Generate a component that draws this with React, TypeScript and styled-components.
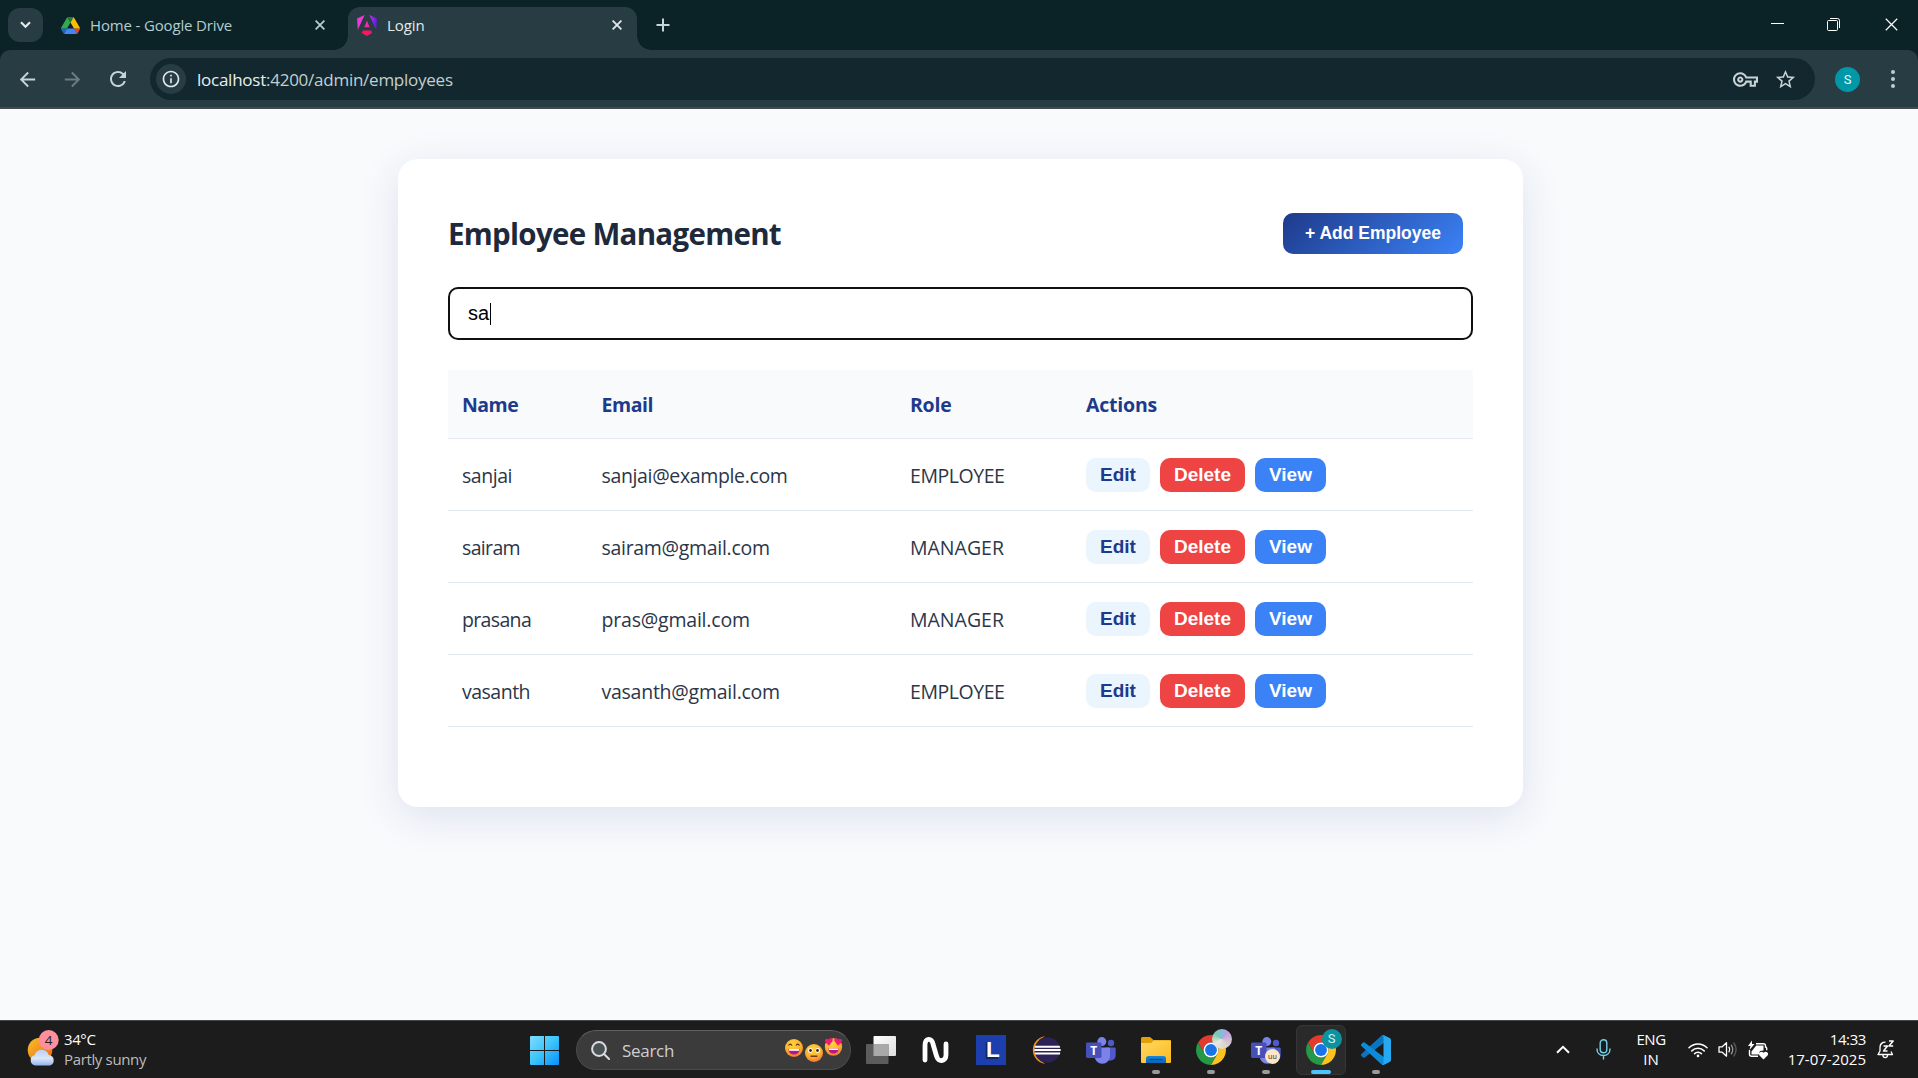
import React from "react";
import styled, { createGlobalStyle, css } from "styled-components";
import { MdArrowBack, MdArrowForward, MdRefresh, MdInfoOutline, MdOutlineVpnKey, MdStarBorder } from "react-icons/md";

const UI_FONT = `"Segoe UI", "Open Sans", "Noto Sans", sans-serif`;
const FORM_FONT = `Arial, "Liberation Sans", sans-serif`;

const GlobalStyle = createGlobalStyle`
  *, *::before, *::after { box-sizing: border-box; }
  body { margin: 0; background: #f8fafc; font-family: ${UI_FONT}; overflow: hidden; }
  svg { display: block; flex: none; }
`;

const Screen = styled.div`
  width: 1918px;
  height: 1078px;
  display: flex;
  flex-direction: column;
  overflow: hidden;
`;

const Label = styled.span<{ $track?: number }>`
  white-space: pre;
  letter-spacing: ${(p) => p.$track ?? 0}px;
`;

/* ---------- Browser window ---------- */

const TabStrip = styled.header`
  height: 50px;
  flex: none;
  display: flex;
  align-items: flex-start;
  background: #0b2227;
  color: #b4cdd2;
`;

const TabSearch = styled.button`
  width: 35px;
  height: 34px;
  margin: 8px 0 0 8px;
  padding: 0;
  border: 0;
  border-radius: 12px;
  background: #283d43;
  display: grid;
  place-items: center;
`;

const Tab = styled.div<{ $active?: boolean }>`
  position: relative;
  display: flex;
  align-items: center;
  height: 43px;
  margin-top: 7px;
  padding-bottom: 7px;
  font-size: 15px;
  line-height: 20px;
  ${(p) =>
    p.$active
      ? css`
          width: 289px;
          padding-left: 9px;
          padding-right: 15px;
          color: #e3eaec;
          background: #283d43;
          border-radius: 12px 12px 0 0;
          &::before,
          &::after {
            content: "";
            position: absolute;
            bottom: 0;
            width: 14px;
            height: 14px;
          }
          &::before {
            left: -14px;
            background: radial-gradient(circle at 0 0, transparent 13.5px, #283d43 14px);
          }
          &::after {
            right: -14px;
            background: radial-gradient(circle at 100% 0, transparent 13.5px, #283d43 14px);
          }
        `
      : css`
          width: 305px;
          padding-left: 18px;
          padding-right: 23px;
        `}
`;

const TabTitle = styled(Label)`
  margin-left: 10px;
  flex: 1;
`;

const NewTab = styled.div`
  margin: 18px 0 0 19px;
`;

const WindowButtons = styled.div`
  margin-left: auto;
  padding: 18px 20px 0 0;
  display: flex;
  gap: 45px;
  color: #fff;
  & > :first-child {
    margin-right: -2px;
  }
`;

const Toolbar = styled.div`
  height: 59px;
  flex: none;
  background: #0b2227;
`;

const ToolbarInner = styled.div`
  height: 59px;
  display: flex;
  align-items: center;
  padding-top: 1px;
  background: #283d43;
  border-bottom: 2px solid #45494c;
  border-radius: 10px 10px 0 0;
  color: #c3d5da;
`;

const NavButtons = styled.nav`
  width: 150px;
  display: flex;
  align-items: center;
  padding-left: 16px;
  gap: 22px;
  & > :nth-child(2) {
    color: #6b7d83;
  }
`;

const Omnibox = styled.div`
  width: 1665px;
  height: 42px;
  border-radius: 21px;
  background: #12282e;
  display: flex;
  align-items: center;
  padding: 0 18px 0 6px;
  color: #c3cfd2;
`;

const InfoBadge = styled.span`
  width: 30px;
  height: 30px;
  border-radius: 50%;
  background: #283d43;
  color: #dfe8ea;
  display: grid;
  place-items: center;
`;

const Url = styled(Label)`
  flex: 1;
  margin-left: 11px;
  padding-top: 2px;
  font-size: 17px;
  line-height: 24px;
  em {
    font-style: normal;
    color: #e6eef0;
  }
`;

const OmniActions = styled.div`
  display: flex;
  align-items: center;
  gap: 16px;
  color: #c8d3d6;
`;

const Avatar = styled.span`
  width: 25px;
  height: 25px;
  margin-left: 20px;
  border-radius: 50%;
  background: #0097a7;
  color: #e8f6f8;
  font: 13px/25px Roboto, sans-serif;
  text-align: center;
`;

const MenuDots = styled.span`
  margin-left: 30.5px;
  display: flex;
  flex-direction: column;
  gap: 3px;
  i {
    width: 4px;
    height: 4px;
    border-radius: 50%;
    background: #b9cfd4;
  }
`;

/* ---------- Page ---------- */

const Page = styled.main`
  flex: 1;
  min-height: 0;
  padding: 50px 0 0 398px;
  background: #f8fafc;
`;

const Card = styled.section`
  width: 1125px;
  height: 648px;
  padding: 54px 50px 0;
  border-radius: 20px;
  background: #fff;
  box-shadow: 0 10px 40px rgba(30, 58, 138, 0.12);
`;

const CardHeader = styled.div`
  height: 41px;
  display: flex;
  justify-content: space-between;
  align-items: center;
  padding-right: 10px;
`;

const Title = styled.h1`
  margin: 0;
  padding-top: 1px;
  font-size: 29.5px;
  line-height: 40px;
  font-weight: 700;
  color: #1e293b;
`;

const AddButton = styled.button`
  height: 41px;
  width: 180px;
  padding: 0 0 2px;
  border: 0;
  border-radius: 10px;
  background: linear-gradient(135deg, #1e3a8a, #3b82f6);
  color: #fff;
  font: 700 17.5px/24px ${FORM_FONT};
`;

const SearchField = styled.div`
  height: 53px;
  margin-top: 33px;
  padding: 0 18px;
  border: 2px solid #101010;
  border-radius: 10px;
  display: flex;
  align-items: center;
  font: 20px/23px ${FORM_FONT};
  color: #000;
`;

const Caret = styled.i`
  width: 1px;
  height: 22px;
  margin-left: 1px;
  background: #000;
`;

const Row = styled.div<{ $head?: boolean }>`
  display: grid;
  grid-template-columns: 139.5px 308.5px 176px 1fr;
  align-items: center;
  height: ${(p) => (p.$head ? 69 : 72)}px;
  padding: 0 14px;
  border-bottom: 1px solid #e2e8f4;
  background: ${(p) => (p.$head ? "#f8fafc" : "#fff")};
  color: ${(p) => (p.$head ? "#1e3a8a" : "#2b3648")};
  font-weight: ${(p) => (p.$head ? 700 : 400)};
  font-size: 19.5px;
  line-height: 28px;
  & > span {
    padding-top: 2px;
  }
`;

const Table = styled.div`
  margin-top: 30px;
`;

const Actions = styled.div`
  display: flex;
  gap: 10px;
`;

const tones = {
  edit: { bg: "#eaf5fd", fg: "#1e3a8a", w: 64 },
  delete: { bg: "#ef4444", fg: "#fff", w: 85 },
  view: { bg: "#3b82f6", fg: "#fff", w: 71 },
};

const ActionButton = styled.button<{ $tone: keyof typeof tones }>`
  width: ${(p) => tones[p.$tone].w}px;
  height: 34px;
  padding: 0;
  border: 0;
  border-radius: 10px;
  background: ${(p) => tones[p.$tone].bg};
  color: ${(p) => tones[p.$tone].fg};
  font: 700 19px/22px ${FORM_FONT};
`;

/* ---------- Taskbar ---------- */

const Taskbar = styled.footer`
  height: 58px;
  flex: none;
  display: flex;
  border-top: 1px solid #44484a;
  background: #1c1c1c;
  color: #fff;
`;

const Weather = styled.div`
  width: 517px;
  padding-left: 26px;
  display: flex;
  align-items: center;
  gap: 4px;
`;

const TwoLines = styled.div<{ $align?: string }>`
  display: flex;
  flex-direction: column;
  padding-bottom: 2px;
  text-align: ${(p) => p.$align ?? "left"};
  font-size: 15px;
  line-height: 20px;
`;

const Muted = styled(Label)`
  color: #bdbdbd;
`;

const Slot = styled.div<{ $active?: boolean }>`
  position: relative;
  width: 55px;
  display: grid;
  place-items: center;
  padding-top: 1px;
  ${(p) =>
    p.$active &&
    css`
      width: 50px;
      height: 50px;
      margin: 4px 2.5px 0;
      padding: 0;
      border: 1px solid #363636;
      border-radius: 6px;
      background: #2a2a2a;
    `}
`;

const Pip = styled.i<{ $active?: boolean }>`
  position: absolute;
  bottom: ${(p) => (p.$active ? 0 : 4)}px;
  left: 50%;
  width: ${(p) => (p.$active ? 20 : 8)}px;
  height: 4px;
  transform: translateX(-50%);
  border-radius: 2px;
  background: ${(p) => (p.$active ? "#4cc2ff" : "#9a9a9a")};
`;

const SearchPill = styled.div`
  width: 275px;
  height: 40px;
  margin: 9px 2px 0 4px;
  padding: 0 6px 0 14px;
  border: 1px solid #4b4b4b;
  border-top-color: #606060;
  border-radius: 20px;
  background: #3b3b3b;
  display: flex;
  align-items: center;
  font-size: 17px;
  color: #cfcfcf;
  & > span {
    flex: 1;
    margin-left: 12px;
  }
`;

const Tray = styled.div`
  margin-left: auto;
  padding-right: 24px;
  display: flex;
  align-items: center;
`;

const Gap = styled.span<{ $w: number }>`
  flex: none;
  width: ${(p) => p.$w}px;
`;

/* ---------- Drawings ---------- */

const Cross = ({ size = 10, w = 1.8 }: { size?: number; w?: number }) => (
  <svg width={size} height={size} viewBox="0 0 10 10" stroke="currentColor" strokeWidth={w} fill="none">
    <path d="M.6 .6 9.4 9.4M9.4 .6 .6 9.4" />
  </svg>
);

const DriveLogo = () => (
  <svg width="19" height="17" viewBox="0 0 87.3 78">
    <path d="m6.6 66.85 3.85 6.65c.8 1.4 1.95 2.5 3.3 3.3l13.75-23.8h-27.5c0 1.55.4 3.1 1.2 4.5z" fill="#1967d2" />
    <path d="m43.65 25-13.75-23.8c-1.35.8-2.5 1.9-3.3 3.3l-25.4 44a9.06 9.06 0 0 0 -1.2 4.5h27.5z" fill="#34a853" />
    <path d="m73.55 76.8c1.35-.8 2.5-1.9 3.3-3.3l1.6-2.75 7.65-13.25c.8-1.4 1.2-2.95 1.2-4.5h-27.502l5.852 11.5z" fill="#ea4335" />
    <path d="m43.65 25 13.75-23.8c-1.35-.8-2.9-1.2-4.5-1.2h-18.5c-1.6 0-3.15.45-4.5 1.2z" fill="#188038" />
    <path d="m59.8 53h-32.3l-13.75 23.8c1.35.8 2.9 1.2 4.5 1.2h50.8c1.6 0 3.15-.45 4.5-1.2z" fill="#4285f4" />
    <path d="m73.4 26.5-12.7-22c-.8-1.4-1.95-2.5-3.3-3.3l-13.75 23.8 16.15 28h27.45c0-1.55-.4-3.1-1.2-4.5z" fill="#fbbc04" />
  </svg>
);

const AngularLogo = () => (
  <svg width="20" height="21" viewBox="0 0 223 236">
    <defs>
      <linearGradient id="ngA" x1="0" y1="0" x2="1" y2="0.2">
        <stop offset="0" stopColor="#f637d0" />
        <stop offset=".45" stopColor="#e040d8" />
        <stop offset="1" stopColor="#6a1cf0" />
      </linearGradient>
      <linearGradient id="ngB" x1="0" y1="0" x2="1" y2="0">
        <stop offset="0" stopColor="#ff1654" />
        <stop offset="1" stopColor="#f0186c" />
      </linearGradient>
    </defs>
    <path fill="url(#ngA)" d="M222.077 39.192l-8.019 125.923L137.387 0l84.69 39.192zM7.937 165.115L0 39.192 84.69 0 7.937 165.115z" />
    <path fill="#f02aa8" d="M111.039 62.675l30.357 73.803H80.681l30.358-73.803z" />
    <path fill="url(#ngB)" d="M168.972 202.017l-57.933 33.056-57.934-33.056 11.783-28.556h92.301l11.783 28.556z" />
  </svg>
);

const WeatherIcon = () => (
  <svg width="34" height="40" viewBox="0 0 34 40">
    <defs>
      <linearGradient id="sun" x1="0" y1="0" x2="1" y2="1">
        <stop offset="0" stopColor="#f6c02c" />
        <stop offset="1" stopColor="#f0650c" />
      </linearGradient>
      <linearGradient id="cloud" x1="0" y1="0" x2="0" y2="1">
        <stop offset="0" stopColor="#b9d0f5" />
        <stop offset=".55" stopColor="#dbe6f7" />
        <stop offset="1" stopColor="#8fb4ef" />
      </linearGradient>
    </defs>
    <circle cx="14" cy="20" r="12.3" fill="url(#sun)" />
    <path d="M9.500 35.500a5.200 5.200 0 0 1-1-10.200c1-3.600 4-5.500 7-5.500 3.600 0 6.300 2 7.200 5.100a5.400 5.400 0 0 1 1 10.600z" fill="url(#cloud)" />
    <circle cx="22.700" cy="10" r="10" fill="#ff8f9c" />
    <text x="22.700" y="15" textAnchor="middle" fontFamily="Open Sans" fontSize="13.500" fill="#222">4</text>
  </svg>
);

const StartLogo = () => (
  <svg width="29" height="29" viewBox="0 0 29 29">
    <defs>
      <linearGradient id="win" x1="0" y1="0" x2="1" y2="1">
        <stop offset="0" stopColor="#7fdcff" />
        <stop offset=".5" stopColor="#3cc4fb" />
        <stop offset="1" stopColor="#0a8efc" />
      </linearGradient>
    </defs>
    <path fill="url(#win)" d="M1 0h13v14H0V1a1 1 0 0 1 1-1zM15 0h13a1 1 0 0 1 1 1v13H15zM0 15h14v14H1a1 1 0 0 1-1-1zM15 15h14v13a1 1 0 0 1-1 1H15z" />
  </svg>
);

const Magnifier = () => (
  <svg width="19" height="19" viewBox="0 0 19 19" fill="none" stroke="#d8dde0" strokeWidth="2" strokeLinecap="round">
    <circle cx="8" cy="8" r="6.900" fill="#4c5154" />
    <path d="M13 13l5 5" />
  </svg>
);

const Emojis = () => (
  <svg width="60" height="26" viewBox="0 0 60 26">
    <defs>
      <radialGradient id="face" cx=".45" cy=".3" r=".75">
        <stop offset="0" stopColor="#ffd53c" />
        <stop offset=".6" stopColor="#fdb12c" />
        <stop offset="1" stopColor="#ee6a35" />
      </radialGradient>
    </defs>
    <circle cx="10" cy="11" r="9" fill="url(#face)" />
    <path d="M4.500 12h11c0 3.800-2.500 5.500-5.500 5.500S4.500 15.800 4.500 12z" fill="#b5178b" />
    <path d="M5 12h10v1.800H5z" fill="#fff" />
    <path d="M4.500 8.500q1.800-2.600 3.600 0M11.900 8.500q1.800-2.600 3.600 0" fill="none" stroke="#5b2a1c" strokeWidth="1.200" />
    <circle cx="30" cy="16" r="9" fill="url(#face)" />
    <circle cx="26.300" cy="13.500" r="2.400" fill="#fff" />
    <circle cx="33.700" cy="13.500" r="2.400" fill="#fff" />
    <circle cx="26.500" cy="13.500" r="1.400" fill="#40221a" />
    <circle cx="33.500" cy="13.500" r="1.400" fill="#40221a" />
    <path d="M26.500 19.200h7" stroke="#5b2a1c" strokeWidth="1.300" />
    <circle cx="49.500" cy="10" r="8.700" fill="url(#face)" />
    <path d="M44.500 11.500h10c0 3.600-2.200 5-5 5s-5-1.400-5-5z" fill="#b5178b" />
    <path d="M45 11.500h9v1.500h-9z" fill="#fff" />
    <path d="M45 8.800l-3.600-3.500c-1.700-2.300 1.200-5.200 3.400-2.700 1.200-3 5-1.600 3.700 1.400zM54 8.800l-3.500-4.800c-1.300-3 2.500-4.400 3.700-1.400 2.200-2.500 5.100.4 3.400 2.700z" fill="#ee1c72" />
  </svg>
);

const TaskViewIcon = () => (
  <svg width="30" height="28" viewBox="0 0 30 28">
    <defs>
      <linearGradient id="tv" x1="0" y1="0" x2="1" y2="1">
        <stop offset="0" stopColor="#fff" />
        <stop offset="1" stopColor="#dcdcdc" />
      </linearGradient>
    </defs>
    <rect x="7.500" y="0" width="22.500" height="20" rx="1" fill="url(#tv)" />
    <rect x="0" y="8" width="22.500" height="20" rx="1" fill="#5c5c5c" />
    <rect x="7.500" y="8" width="15" height="12" fill="#a9a9a9" />
  </svg>
);

const WaveIcon = () => (
  <svg width="27" height="28" viewBox="0 0 27 28" fill="none" stroke="#fff" strokeWidth="4.800" strokeLinejoin="round">
    <path d="M3 24V9.500C3 1.500 10 1.500 11 8l3.500 12c1.500 6.500 9.500 6 9.500-1.500V8" strokeLinecap="round" />
  </svg>
);

const LetterIcon = () => (
  <svg width="30" height="30" viewBox="0 0 30 30">
    <rect width="30" height="30" fill="#1d3fae" />
    <text x="8.200" y="23.500" fontFamily="Liberation Sans" fontWeight="700" fontSize="24" fill="#0e2a5c">L</text>
    <text x="10" y="22" fontFamily="Liberation Sans" fontWeight="700" fontSize="22.500" fill="#fff">L</text>
  </svg>
);

const EclipseIcon = () => (
  <svg width="30" height="28" viewBox="0 0 30 28">
    <path d="M14 .3A13.800 13.800 0 0 0 14 27.700 15 15 0 0 1 14 .3z" fill="#f7941e" />
    <circle cx="16.300" cy="14" r="12.800" fill="#2c2255" />
    <path d="M4 9.800h24.600l.6 2H3.600zM3.300 13.100h26.400v2H3.300zM3.600 16.400h25.800l-.6 2H4.200z" fill="#fff" />
  </svg>
);

const TeamsIcon = () => (
  <svg width="30" height="27" viewBox="0 0 30 27">
    <circle cx="25" cy="6" r="3.200" fill="#5059c9" />
    <path d="M20 10.500h8.500a1.200 1.200 0 0 1 1.200 1.200v6.500a5.500 5.500 0 0 1-9.700 3.500z" fill="#5059c9" />
    <circle cx="15.800" cy="4.600" r="4.500" fill="#7b83eb" />
    <path d="M9.500 10.500h13.200a1.300 1.300 0 0 1 1.300 1.300V19a7.700 7.700 0 0 1-15.400 0z" fill="#7b83eb" />
    <rect x="0" y="5.500" width="15.500" height="15.500" rx="1.400" fill="#4650b8" />
    <text x="7.700" y="17.500" textAnchor="middle" fontFamily="Open Sans" fontWeight="700" fontSize="12" fill="#fff">T</text>
  </svg>
);

const FolderIcon = () => (
  <svg width="30" height="26" viewBox="0 0 30 26">
    <defs>
      <linearGradient id="fold" x1="0" y1="0" x2="1" y2="1">
        <stop offset="0" stopColor="#ffd965" />
        <stop offset="1" stopColor="#fcb91c" />
      </linearGradient>
      <linearGradient id="foldBlue" x1="0" y1="0" x2="0" y2="1">
        <stop offset="0" stopColor="#1588dc" />
        <stop offset="1" stopColor="#0c63b4" />
      </linearGradient>
    </defs>
    <path d="M1.500 0H9l3.500 3H29a1 1 0 0 1 1 1v8H0V1.500A1.500 1.500 0 0 1 1.500 0z" fill="#e3a008" />
    <path d="M0 6h10l3-2.500h16a1 1 0 0 1 1 1V25a1 1 0 0 1-1 1H1a1 1 0 0 1-1-1z" fill="url(#fold)" />
    <path d="M5 26v-4.500A2.500 2.500 0 0 1 7.500 19h15a2.500 2.500 0 0 1 2.500 2.500V26z" fill="url(#foldBlue)" />
    <path d="M8.500 22.500h13" stroke="#0a4a86" strokeWidth="1.200" />
  </svg>
);

const ChromeIcon = () => (
  <svg width="30" height="30" viewBox="0 0 48 48">
    <path d="M44.780 12A24 24 0 0 0 3.220 12L13.610 30A12 12 0 0 1 24 12Z" fill="#e33b2e" />
    <path d="M3.220 12A24 24 0 0 0 24 48L34.390 30A12 12 0 0 1 13.610 30Z" fill="#249a47" />
    <path d="M24 48A24 24 0 0 0 44.780 12H24A12 12 0 0 1 34.390 30Z" fill="#fcc31e" />
    <circle cx="24" cy="24" r="12" fill="#fff" />
    <circle cx="24" cy="24" r="9.500" fill="#1a73e8" />
  </svg>
);

const CodeIcon = () => (
  <svg width="30" height="30" viewBox="0 0 100 100">
    <path fill="#0b74bd" d="M96.460 10.800L75.860.880C73.470-.270 70.620.210 68.750 2.080L1.300 63.580C-.510 65.230-.510 68.090 1.300 69.740L6.810 74.750C8.300 76.100 10.530 76.200 12.140 74.980L93.360 13.360C96.090 11.300 100 13.240 100 16.660V16.420C100 14.020 98.620 11.840 96.460 10.800Z" />
    <path fill="#0b8bd8" d="M96.460 89.200L75.860 99.120C73.470 100.270 70.620 99.790 68.750 97.920L1.300 36.420C-.510 34.770-.510 31.910 1.300 30.260L6.810 25.250C8.300 23.900 10.530 23.800 12.140 25.020L93.360 86.640C96.090 88.700 100 86.760 100 83.340V83.580C100 85.980 98.620 88.160 96.460 89.200Z" />
    <path fill="#27a9f2" d="M75.860 99.130C73.470 100.270 70.620 99.790 68.750 97.920C71.060 100.220 75 98.590 75 95.330V4.670C75 1.410 71.060-.220 68.750 2.080C70.620.210 73.470-.270 75.860.870L96.460 10.780C98.620 11.820 100 14.010 100 16.410V83.590C100 85.990 98.620 88.180 96.460 89.220Z" />
  </svg>
);

const Badge = styled.span<{ $x: number; $y: number; $d: number; $bg: string; $fg?: string; $fs?: number }>`
  position: absolute;
  left: ${(p) => p.$x}px;
  top: ${(p) => p.$y}px;
  width: ${(p) => p.$d}px;
  height: ${(p) => p.$d}px;
  border-radius: 50%;
  background: ${(p) => p.$bg};
  color: ${(p) => p.$fg ?? "#fff"};
  font: ${(p) => p.$fs ?? 12}px/${(p) => p.$d}px Roboto, sans-serif;
  text-align: center;
`;

const ChevronUp = () => (
  <svg width="14" height="9" viewBox="0 0 14 9" fill="none" stroke="#fff" strokeWidth="2">
    <path d="M1 7.800 7 1.800l6 6" />
  </svg>
);

const MicIcon = () => (
  <svg width="15" height="21" viewBox="0 0 15 21" fill="none" stroke="#74cfe8" strokeWidth="1.400" strokeLinecap="round">
    <rect x="4.200" y=".8" width="6.600" height="13" rx="3.300" />
    <path d="M1 10c0 4.200 2.800 6.500 6.500 6.500S14 14.200 14 10M7.500 16.500V20" />
  </svg>
);

const WifiIcon = () => (
  <svg width="20" height="16" viewBox="0 0 20 16" fill="none" stroke="#fff" strokeWidth="1.500" strokeLinecap="round">
    <path d="M1 5.800a12.700 12.700 0 0 1 18 0M3.800 8.900a8.800 8.800 0 0 1 12.400 0M6.600 11.600a4.800 4.800 0 0 1 6.800 0" />
    <circle cx="10" cy="13.900" r="1.300" fill="#fff" stroke="none" />
  </svg>
);

const SpeakerIcon = () => (
  <svg width="20" height="17" viewBox="0 0 20 17" fill="none" stroke="#fff" strokeWidth="1.300" strokeLinecap="round" strokeLinejoin="round">
    <path d="M1 5.800h3.200L8.500 1.800v13.400L4.200 11.200H1z" />
    <path d="M11 6.200q1.600 2.300 0 4.600" />
    <path d="M13.300 4.200q3 4.300 0 8.600" stroke="#9a9a9a" />
    <path d="M15.800 2q4.600 6.500 0 13" stroke="#5a5a5a" />
  </svg>
);

const BatteryIcon = () => (
  <svg width="20" height="20" viewBox="0 0 20 20">
    <path d="M8 3.700h7.500a2 2 0 0 1 2 2V7q1.200 0 1.200 1.200v2M1.500 10v4.300a2 2 0 0 0 2 2H10" fill="none" stroke="#fff" strokeWidth="1.400" />
    <path d="M8.200 5.600h7.300v4.800l-3.500.6-1.300 3.400H3.500v-3z" fill="#fff" />
    <path d="M4 .5 0 6h2.500L1.500 10 6.500 4H4z" fill="#fff" />
    <path d="M15.500 19.500l-4-4c-2-2.600 1.800-5.400 4-2.700 2.200-2.700 6 .1 4 2.700z" fill="#fff" />
  </svg>
);

const BellIcon = () => (
  <svg width="17" height="19" viewBox="0 0 17 19" fill="none" stroke="#fff" strokeWidth="1.300" strokeLinejoin="round">
    <path d="M8.500 2.200C5 2.200 3 4.500 3 7.500V11L1 14.500h14.500L14 11.500M5.800 15q.3 2.600 2.400 2.600t2.400-2.600" />
    <path d="M6.500 6h4l-4 5h4M12 1h4.200L12 6h4.200" strokeWidth="1.500" />
  </svg>
);

/* ---------- Data ---------- */

const columns = [
  { title: "Name", track: -0.55 },
  { title: "Email", track: -0.45 },
  { title: "Role", track: -0.25 },
  { title: "Actions", track: -0.2 },
];

const employees = [
  { name: "sanjai", email: "sanjai@example.com", role: "EMPLOYEE", tracks: [-0.45, -0.35, -0.45] },
  { name: "sairam", email: "sairam@gmail.com", role: "MANAGER", tracks: [-0.65, -0.3, 0] },
  { name: "prasana", email: "pras@gmail.com", role: "MANAGER", tracks: [-0.65, -0.2, 0] },
  { name: "vasanth", email: "vasanth@gmail.com", role: "EMPLOYEE", tracks: [-0.5, -0.25, -0.45] },
];

export default function App() {
  return (
    <Screen>
      <GlobalStyle />
      <TabStrip>
        <TabSearch aria-label="Search tabs">
          <svg width="11" height="8" viewBox="0 0 11 8" fill="none" stroke="#e3eaec" strokeWidth="2.200">
            <path d="M1 1.200 5.500 5.700 10 1.200" />
          </svg>
        </TabSearch>
        <Tab>
          <DriveLogo />
          <TabTitle $track={-0.15}>Home - Google Drive</TabTitle>
          <Cross />
        </Tab>
        <Tab $active>
          <AngularLogo />
          <TabTitle $track={-0.1}>Login</TabTitle>
          <Cross />
        </Tab>
        <NewTab>
          <svg width="14" height="14" viewBox="0 0 14 14" stroke="#c3d5da" strokeWidth="2">
            <path d="M7 .5v13M.5 7h13" />
          </svg>
        </NewTab>
        <WindowButtons>
          <svg width="13" height="13" viewBox="0 0 13 13" stroke="#fff">
            <path d="M0 5.500h13" />
          </svg>
          <svg width="13" height="13" viewBox="0 0 13 13" fill="none" stroke="#fff">
            <path d="M3 .5h7.500a2 2 0 0 1 2 2V10" />
            <rect x=".5" y="2.500" width="10" height="10" rx="1" />
          </svg>
          <Cross size={13} w={0.9} />
        </WindowButtons>
      </TabStrip>
      <Toolbar>
        <ToolbarInner>
          <NavButtons>
            <MdArrowBack size={23} />
            <MdArrowForward size={23} />
            <MdRefresh size={24} />
          </NavButtons>
          <Omnibox>
            <InfoBadge>
              <MdInfoOutline size={20} />
            </InfoBadge>
            <Url $track={-0.25}>
              <em>localhost</em>:4200/admin/employees
            </Url>
            <OmniActions>
              <MdOutlineVpnKey size={25} />
              <MdStarBorder size={23} />
            </OmniActions>
          </Omnibox>
          <Avatar>S</Avatar>
          <MenuDots>
            <i />
            <i />
            <i />
          </MenuDots>
        </ToolbarInner>
      </Toolbar>

      <Page>
        <Card>
          <CardHeader>
            <Title>
              <Label $track={-0.7}>Employee Management</Label>
            </Title>
            <AddButton>+ Add Employee</AddButton>
          </CardHeader>
          <SearchField>
            sa
            <Caret />
          </SearchField>
          <Table>
            <Row $head>
              {columns.map((c) => (
                <Label key={c.title} $track={c.track}>
                  {c.title}
                </Label>
              ))}
            </Row>
            {employees.map((e) => (
              <Row key={e.name}>
                <Label $track={e.tracks[0]}>{e.name}</Label>
                <Label $track={e.tracks[1]}>{e.email}</Label>
                <Label $track={e.tracks[2]}>{e.role}</Label>
                <Actions>
                  <ActionButton $tone="edit">Edit</ActionButton>
                  <ActionButton $tone="delete">Delete</ActionButton>
                  <ActionButton $tone="view">View</ActionButton>
                </Actions>
              </Row>
            ))}
          </Table>
        </Card>
      </Page>

      <Taskbar>
        <Weather>
          <WeatherIcon />
          <TwoLines>
            <Label $track={-0.4}>34°C</Label>
            <Muted $track={-0.35}>Partly sunny</Muted>
          </TwoLines>
        </Weather>
        <Slot>
          <StartLogo />
        </Slot>
        <SearchPill>
          <Magnifier />
          <Label $track={-0.3}>Search</Label>
          <Emojis />
        </SearchPill>
        <Slot>
          <TaskViewIcon />
        </Slot>
        <Slot>
          <WaveIcon />
        </Slot>
        <Slot>
          <LetterIcon />
        </Slot>
        <Slot>
          <EclipseIcon />
        </Slot>
        <Slot>
          <TeamsIcon />
        </Slot>
        <Slot>
          <FolderIcon />
          <Pip />
        </Slot>
        <Slot>
          <ChromeIcon />
          <Badge $x={28.5} $y={8} $d={20} $bg="conic-gradient(from 20deg, #b79be0, #d9d2cc 35%, #e9e6e2 60%, #79c9ae 80%, #8fb7e8)" />
          <Pip />
        </Slot>
        <Slot>
          <TeamsIcon />
          <Badge $x={27} $y={27.500} $d={15} $bg="#fbe6c8" $fg="#5c4a30" $fs={8}>
            uu
          </Badge>
          <Pip />
        </Slot>
        <Slot $active>
          <ChromeIcon />
          <Badge $x={25} $y={3} $d={20} $bg="#0b93a1" $fg="#d9eef0" $fs={13}>
            S
          </Badge>
          <Pip $active />
        </Slot>
        <Slot>
          <CodeIcon />
          <Pip />
        </Slot>
        <Tray>
          <ChevronUp />
          <Gap $w={26} />
          <MicIcon />
          <Gap $w={25} />
          <TwoLines $align="center">
            <Label $track={-0.4}>ENG</Label>
            <Label>IN</Label>
          </TwoLines>
          <Gap $w={22} />
          <WifiIcon />
          <Gap $w={10} />
          <SpeakerIcon />
          <Gap $w={10} />
          <BatteryIcon />
          <Gap $w={20} />
          <TwoLines $align="right">
            <Label $track={-0.4}>14:33</Label>
            <Label>17-07-2025</Label>
          </TwoLines>
          <Gap $w={11} />
          <BellIcon />
        </Tray>
      </Taskbar>
    </Screen>
  );
}
